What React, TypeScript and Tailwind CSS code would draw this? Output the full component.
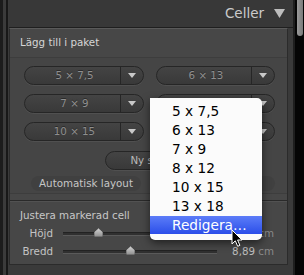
const sizes = [
  ['5 × 7,5', '6 × 13'],
  ['7 × 9', ''],
  ['10 × 15', ''],
]

const menuItems = ['5 x 7,5', '6 x 13', '7 x 9', '8 x 12', '10 x 15', '13 x 18']

const Arrow = () => (
  <svg width="8" height="5" viewBox="0 0 8 5">
    <path d="M0 0 H8 L4 5 Z" fill="#c9c9c9" />
  </svg>
)

// labels under the popup are left empty, they are hidden in the picture anyway
const SizeButton = ({ label, wide }: { label: string; wide: boolean }) => (
  <div
    className={`flex h-[19px] items-stretch rounded-full border border-[#262626] bg-linear-to-b from-[#444444] to-[#393939] shadow-[0_1px_0_#505050] ${
      wide ? 'w-[120px]' : 'w-[119px]'
    }`}
  >
    <div className="flex flex-1 items-center justify-center pl-1 text-[10.3px] text-[#8f8f8f] [text-shadow:0_-1px_0_#2a2a2a]">
      {label}
    </div>
    <div className="w-px bg-[#262626]" />
    <div className="flex w-[22px] items-center justify-center">
      <Arrow />
    </div>
  </div>
)

const Thumb = () => (
  <svg width="9" height="9" viewBox="0 0 9 9">
    <defs>
      <linearGradient id="th" x1="0" y1="0" x2="0" y2="1">
        <stop offset="0" stopColor="#d6d6d6" />
        <stop offset="1" stopColor="#8c8c8c" />
      </linearGradient>
    </defs>
    <path d="M4.5 0 L9 4 V9 H0 V4 Z" fill="url(#th)" stroke="#2a2a2a" strokeWidth="0.6" />
  </svg>
)

const SliderRow = ({ label, pos, value }: { label: string; pos: number; value: string }) => (
  <div className="flex h-[18px] items-center pl-[10px] pr-[13px]">
    <div className="w-[33px] text-right text-[10.3px] text-[#c4c4c4]">{label}</div>
    <div className="relative ml-[10px] h-[4px] w-[154px] border-t border-[#222] border-b border-b-[#5a5a5a] bg-[#303030]">
      <div className="absolute top-[-5px]" style={{ left: pos - 4 }}>
        <Thumb />
      </div>
    </div>
    <div className="flex-1 text-right text-[10.3px] text-[#bdbdbd]">
      {value} <span className="text-[#8a8a8a]">cm</span>
    </div>
  </div>
)

const Cursor = () => (
  <svg width="13" height="19" viewBox="0 0 13 19">
    <path
      d="M1 1 L1 15 L4.3 11.8 L6.7 17.3 L8.9 16.3 L6.6 11 L11 11 Z"
      fill="#000"
      stroke="#fff"
      strokeWidth="1"
      strokeLinejoin="round"
    />
  </svg>
)

export default function App() {
  return (
    <div className="relative flex h-[275px] w-[304px] overflow-hidden bg-[#3a3a3a] font-['DejaVu_Sans',sans-serif]">
      {/* left frame */}
      <div className="flex">
        <div className="w-[3px] bg-[#1c1c1c]" />
        <div className="w-[3px] bg-[#3b3b3b]" />
        <div className="w-[2px] bg-[#181818]" />
        <div className="w-px bg-[#3a3a3a]" />
      </div>

      <div className="flex w-[284px] flex-col">
        <div className="flex h-[28px] items-center justify-end gap-[10px] border-b border-[#1f1f1f] bg-[#383838] pr-[8px]">
          <span className="text-[13.5px] text-[#cbcbcb]">Celler</span>
          <svg width="11" height="9" viewBox="0 0 11 9">
            <path d="M0 0 H11 L5.5 9 Z" fill="#bdbdbd" />
          </svg>
        </div>

        <div className="flex">
          <div className="flex h-[237px] w-[279px] flex-col border border-[#2b2b2b] border-t-[#5a5a5a] bg-[#474747]">
            <div className="flex h-[28px] items-center pl-[10px] text-[10.3px] text-[#d6d6d6]">
              Lägg till i paket
            </div>

            <div className="flex flex-col border-y border-[#3d3d3d] bg-[#454545] pb-[2px] pt-[8px]">
              <div className="flex flex-col gap-[9px] pl-[14px]">
                {sizes.map(([a, b]) => (
                  <div key={a} className="flex gap-[12px]">
                    <SizeButton label={a} wide />
                    <SizeButton label={b} wide={false} />
                  </div>
                ))}
              </div>
              <div className="mt-[10px] flex pl-[95px]">
                <div className="flex h-[19px] w-[89px] items-center justify-center rounded-full border border-[#262626] bg-linear-to-b from-[#444444] to-[#393939] text-[10.3px] text-[#b9b9b9] shadow-[0_1px_0_#505050]">
                  Ny sida
                </div>
              </div>
              <div className="mt-[6px] flex gap-[24px] pl-[21px]">
                <div className="flex h-[15px] w-[110px] items-center justify-center rounded-full bg-[#404040] text-[10.3px] text-[#c6c6c6]">
                  Automatisk layout
                </div>
                <div className="h-[15px] w-[110px] rounded-full bg-[#404040]" />
              </div>
            </div>

            <div className="mt-[6px] border-t border-[#2a2a2a] pt-[7px] shadow-[inset_0_1px_0_#525252]">
              <div className="h-[14px] pl-[10px] text-[10.3px] leading-[14px] text-[#c8c8c8]">
                Justera markerad cell
              </div>
              <div className="mt-[3px]">
                <SliderRow label="Höjd" pos={35} value="12,70" />
                <SliderRow label="Bredd" pos={67} value="8,89" />
              </div>
            </div>
          </div>
          <div className="w-[5px]" />
        </div>
      </div>

      <div className="w-[2px] bg-[#1e1e1e]" />
      <div className="flex w-[9px] justify-center bg-[#050505]">
        <div className="h-[36px] w-[6px] rounded-b-full bg-linear-to-r from-[#9a9a9a] to-[#7a7a7a]" />
      </div>

      {/* popup menu */}
      <div className="absolute left-[150px] top-[98px] flex h-[142px] w-[112px] flex-col rounded-b-[5px] rounded-tr-[5px] bg-[#fbfbfb] pt-[4px] shadow-[0_3px_9px_rgba(0,0,0,0.55)]">
        {menuItems.map((m) => (
          <div key={m} className="flex h-[19px] items-center pl-[22px] text-[13.7px] text-black">
            {m}
          </div>
        ))}
        <div className="flex h-[18px] items-center bg-linear-to-b from-[#5c7cf8] to-[#2c4de9] pl-[22px] text-[13.7px] text-white">
          Redigera…
        </div>
      </div>

      <div className="absolute left-[231px] top-[229px]">
        <Cursor />
      </div>
    </div>
  )
}
